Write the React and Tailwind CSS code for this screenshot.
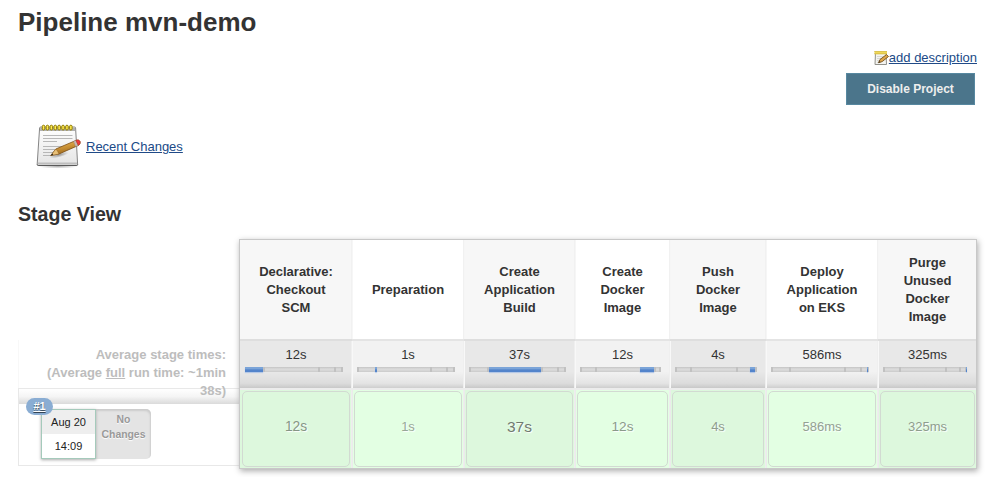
const STAGES = [
  { name: ["Declarative:", "Checkout", "SCM"], avg: "12s", run: "12s", col: "w-[112px]", size: "text-[13.8px]", tone: "text-[#869686]", left: 0, width: 18.5 },
  { name: ["Preparation"], avg: "1s", run: "1s", col: "w-[112px]", size: "text-[13px]", tone: "text-[#98a898]", left: 18.3, width: 2 },
  { name: ["Create", "Application", "Build"], avg: "37s", run: "37s", col: "w-[111px]", size: "text-[15.5px]", tone: "text-[#707a70]", left: 20.6, width: 54 },
  { name: ["Create", "Docker", "Image"], avg: "12s", run: "12s", col: "w-[95px]", size: "text-[13.6px]", tone: "text-[#8a9a8a]", left: 74, width: 17.5 },
  { name: ["Push", "Docker", "Image"], avg: "4s", run: "4s", col: "w-[96px]", size: "text-[13px]", tone: "text-[#8e9d8e]", left: 91.5, width: 6 },
  { name: ["Deploy", "Application", "on EKS"], avg: "586ms", run: "586ms", col: "w-[112px]", size: "text-[13px]", tone: "text-[#93a193]", left: 98, width: 1.4 },
  { name: ["Purge", "Unused", "Docker", "Image"], avg: "325ms", run: "325ms", col: "w-[98px]", size: "text-[13px]", tone: "text-[#8e9d8e]", left: 98.5, width: 1.5 },
];

// Stage boundaries along the full run, in percent
const TICKS = [0, 18.5, 74, 91, 98];

function Notepad({ className }) {
  return (
    <svg viewBox="0 0 48 48" className={className}>
      <defs>
        <linearGradient id="paper" x1="0" y1="0" x2="0" y2="1">
          <stop offset="0" stopColor="#fff" />
          <stop offset="1" stopColor="#e4e4e4" />
        </linearGradient>
        <linearGradient id="wood" x1="0" y1="0" x2=".35" y2="1">
          <stop offset="0" stopColor="#edc87c" />
          <stop offset=".5" stopColor="#cf9638" />
          <stop offset="1" stopColor="#9a661c" />
        </linearGradient>
        <radialGradient id="shade">
          <stop offset="0" stopColor="#000" stopOpacity=".5" />
          <stop offset="1" stopColor="#000" stopOpacity="0" />
        </radialGradient>
      </defs>
      <ellipse cx="23" cy="43.4" rx="20" ry="2.2" fill="url(#shade)" opacity=".6" />
      <path d="M6 4h33.500c.7 0 1 .3 1.100 1l2 36c0 1-.3 1.500-1.300 1.500H3.500c-1 0-1.400-.5-1.300-1.500l2.400-36c0-.7.5-1 1.400-1z" fill="url(#paper)" stroke="#858585" strokeWidth="1" />
      <path d="M2.300 41.500c.2.800.6 1 1.200 1h38c.7 0 1-.3 1.200-1" fill="none" stroke="#555" strokeWidth=".9" />
      <path d="M5.200 4.500h34.800l.2 3.500H5z" fill="#b0b0b0" />
      <path d="M3 39.500h39l.1 2H2.900z" fill="#bdbdbd" />
      <path d="M8 12.500h29.500M8 15.500h29.500M8 18.500h14M8 23.500h24M8 26.500h17M8 29.500h12M8 32.500h9" stroke="#b0b0b0" strokeWidth=".9" />
      <g fill="#ffec50" stroke="#917b00" strokeWidth="1">
        {[7.3, 11.2, 15.1, 19, 22.9, 26.8, 30.7, 34.6].map((x) => (
          <rect key={x} x={x} y="2.200" width="2.500" height="4.800" rx="1.250" />
        ))}
      </g>
      <ellipse cx="24" cy="32" rx="10" ry="2.400" fill="url(#shade)" opacity=".7" transform="rotate(-14 24 32)" />
      <path d="M15.800 32.500l5-6.500 20-8.500c1.600-.7 3.300-.5 4 .7.800 1.600.2 3.300-1.400 4.200L24 31z" fill="url(#wood)" stroke="#7a4d14" strokeWidth=".8" strokeLinejoin="round" />
      <path d="M15.800 32.500l5-6.500 1.700 2 1.500 3z" fill="#e8c078" stroke="#7a4d14" strokeWidth=".4" />
      <path d="M15.800 32.500l1.500-1.900 1 1.400z" fill="#222" />
      <path d="M38.500 18.400l2.500-1 2.100 5-2.400 1.300z" fill="#c6b8b4" stroke="#8b7a74" strokeWidth=".4" />
      <path d="M41 17.400c1.800-.8 3.100-.5 3.800.8.700 1.500.1 3.100-1.500 4z" fill="#f0393c" stroke="#b8302a" strokeWidth=".6" />
    </svg>
  );
}

function SmallNotepad() {
  return (
    <svg viewBox="0 0 16 16" className="h-4 w-4">
      <path d="M2.500 2.500h10.500l.5 12H2z" fill="#f4f4f1" stroke="#91918b" />
      <path d="M4 6.500h7M4 8.500h5M4 10.500h4M4 12.500h4" stroke="#cfcfca" strokeWidth=".8" />
      <path d="M1.500 2.700h12.500" stroke="#eed75a" strokeWidth="3.200" />
      <path d="M1.500 1.500h12.500M1.500 3.700h12.500" stroke="#c0a12b" strokeDasharray="1 1" strokeWidth=".8" />
      <path d="M5.500 12.700l1.500-3.200 6.500-4.900 2 1.900-6.300 5.100z" fill="#dda64b" stroke="#75501c" strokeWidth=".9" />
      <path d="M5.500 12.700l.6-1.500 1.100.9z" fill="#222" />
    </svg>
  );
}

function TimeBar({ stage, last }) {
  return (
    <div className={`relative ml-1 flex h-[5px] bg-[linear-gradient(#c4c4c4_0,#dadada_40%,#dadada_60%,#cacaca)] ${last ? "mr-[9px]" : "mr-2"}`}>
      {TICKS.map((t) => (
        <div key={t} className="absolute top-0 h-full w-0.5 bg-[#c1c1c1]" style={{ left: `${t}%` }} />
      ))}
      <div className="shrink-0" style={{ width: `${stage.left}%` }} />
      <div className="relative shrink-0 bg-[linear-gradient(#7ba4d8,#7ba4d8_30%,#5384cb_60%,#5384cb)] shadow-[0_1px_1px_#b5c8e6]" style={{ width: `${stage.width}%` }} />
    </div>
  );
}

function Stage({ stage, index, last }) {
  const odd = index % 2 === 0;
  const right = last ? "" : "border-r";
  const left = index === 0 ? "pl-px" : "border-l";
  return (
    <div className={`flex flex-col ${stage.col}`}>
      <div className={`flex h-[99px] flex-col items-center justify-center border-r-[#f1f1f1] border-l-[#f6f6f6] text-center font-bold leading-[18px] ${left} ${right} ${odd ? "bg-[#f7f7f7]" : "bg-white"}`}>
        {stage.name.map((line) => (
          <span key={line}>{line}</span>
        ))}
      </div>
      <div className={`h-0.5 ${odd ? "bg-[#dedede]" : "bg-[#e4e4e4]"}`} />
      <div className={`h-[47px] border-r-[#efefef] border-l-[#f8f8f8] pt-1 text-center ${left} ${right} ${odd ? "bg-[linear-gradient(#e8e8e8_0,#e8e8e8_65%,#dcdcdc_90%,#c8c8c8_100%)]" : "bg-[linear-gradient(#f2f2f2_0,#f2f2f2_65%,#e4e4e4_90%,#cecece_100%)]"}`}>
        <div className="h-[22px] leading-[19px] text-[#333]">{stage.avg}</div>
        <TimeBar stage={stage} last={last} />
      </div>
      <div className="h-0.5 bg-[#ececec]" />
      <div className={`h-[78px] border-r-[#eee] border-l-[#ebebeb] pt-px pr-px pb-px ${left} ${right} ${odd ? "bg-[#ddf8dd]" : "bg-[#e3ffe3]"}`}>
        <div className="ml-px flex h-[76px] items-center justify-center rounded-[5px] border border-[#d2dad2] pb-1">
          <span className={`[text-shadow:1px_1px_1px_#fff] ${stage.size} ${stage.tone}`}>{stage.run}</span>
        </div>
      </div>
    </div>
  );
}

export default function App() {
  return (
    <main className="h-[477px] w-[986px] overflow-hidden bg-white pl-[18px] pr-[9px] font-['Liberation_Sans',Arial,sans-serif] text-[13px] text-[#333]">
      <h1 className="h-[50px] pt-[7px] text-[26px] font-bold leading-[30px]">Pipeline mvn-demo</h1>
      <div className="flex h-[72px] flex-col items-end">
        <a className="flex h-[23px] text-[#204a87]">
          <SmallNotepad />
          <span className="leading-[16px] underline">add description</span>
        </a>
        <button className="mr-0.5 h-8 w-[129px] border border-[#5788a0] bg-[#4b758b] text-[12px] font-bold text-[#eee]">Disable Project</button>
      </div>
      <div className="flex h-[81px] items-start pl-[17px]">
        <Notepad className="mt-px h-12 w-12" />
        <a className="ml-[3px] mt-[17px] leading-[15px] text-[#204a87] underline">Recent Changes</a>
      </div>
      <h2 className="h-9 text-[19.600px] font-bold leading-[22px]">Stage View</h2>

      <div className="flex items-start">
        <section className="w-[221px] pt-[101px]">
          <div className="h-[48px] border-l border-[#f8f8f8] pl-5 pr-[13px] pt-1.5 text-right font-bold leading-[18px] text-[#bdbdbd]">
            <div className="relative z-10">
              Average stage times:
              <br />
              (Average <u>full</u> run time: ~1min 38s)
            </div>
          </div>
          <div className="h-[78px] border border-r-0 border-[#e8e8e8]">
            <div className="h-[15px] bg-[linear-gradient(#fff,#f5f5f5_50%,#dadada)]" />
            <div className="relative ml-[22px] mt-[5px] flex h-[50px] w-[110px]">
              <div className="z-10 w-[55px] border border-[#a5cabb] bg-white text-center text-[11px] text-[#222] shadow-[0_1px_3px_#aaa]">
                <div className="h-6 bg-[#eee] leading-[25px]">Aug 20</div>
                <div className="leading-[24px]">14:09</div>
              </div>
              <div className="flex-1 rounded-r-[5px] bg-[#e4e4e4] pt-[3px] text-center text-[10.400px] font-bold leading-[15px] text-[#999] shadow-[inset_-1px_2px_2px_#ccc] [text-shadow:0_1px_1px_#fff]">
                No
                <br />
                Changes
              </div>
              <a className="absolute -left-[15px] -top-[11px] z-20 h-[17px] w-[27px] rounded-full bg-[#8aadd3] text-center text-[11px] font-bold leading-[17px] text-white underline [text-shadow:0_1px_1px_#345]">#1</a>
            </div>
          </div>
        </section>
        <section className="flex h-[230px] w-[738px] border border-[#c8c8c8] shadow-[1px_2px_6px_#aaa]">
          {STAGES.map((stage, i) => (
            <Stage key={i} stage={stage} index={i} last={i === STAGES.length - 1} />
          ))}
        </section>
      </div>
    </main>
  );
}
